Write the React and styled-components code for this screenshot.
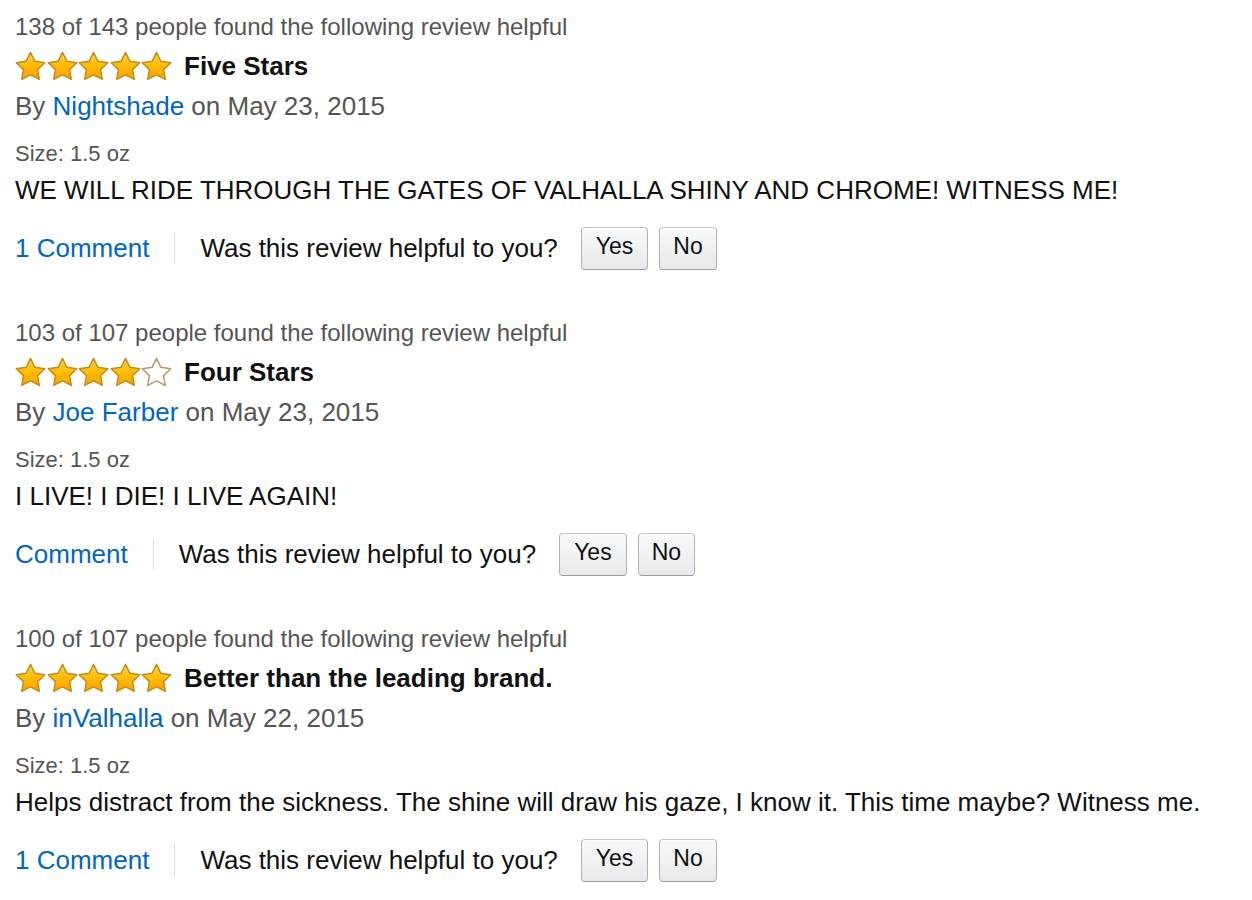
import React from "react";
import styled, { createGlobalStyle } from "styled-components";

const Global = createGlobalStyle`
  html, body { margin: 0; padding: 0; background: #fff; }
  body { font-family: "Liberation Sans", Arial, Helvetica, sans-serif; color: #111; }
`;

const Page = styled.div`
  padding: 8px 0 0 15px;
  display: flex;
  flex-direction: column;
  gap: 44px;
`;

const Review = styled.section`
  display: flex;
  flex-direction: column;
`;

const Helpful = styled.div`
  font-size: 24px;
  line-height: 38px;
  color: #555;
`;

const TitleRow = styled.div`
  display: flex;
  align-items: center;
  height: 40px;
  gap: 12px;
`;

const Stars = styled.div`
  display: flex;
  gap: 0.5px;
`;

const Title = styled.span`
  font-size: 26px;
  font-weight: 700;
  color: #111;
  line-height: 40px;
`;

const Byline = styled.div`
  font-size: 26px;
  line-height: 40px;
  color: #555;
`;

const Link = styled.a`
  color: #0066c0;
  text-decoration: none;
`;

const Size = styled.div`
  margin-top: 10px;
  font-size: 22px;
  line-height: 36px;
  color: #555;
`;

const Body = styled.div`
  font-size: 26px;
  line-height: 36px;
  color: #111;
`;

const Actions = styled.div`
  margin-top: 18px;
  display: flex;
  align-items: center;
  height: 44px;
  font-size: 26px;
`;

const CommentLink = styled(Link)`
  padding-right: 25px;
  border-right: 1px solid #ddd;
  line-height: 30px;
`;

const Question = styled.span`
  padding-left: 25px;
  margin-right: 23px;
  color: #111;
`;

const Buttons = styled.div`
  display: flex;
  gap: 11px;
`;

const Btn = styled.button`
  font-family: inherit;
  font-size: 23px;
  color: #111;
  height: 43px;
  padding: 0 ${(p) => p.$px}px 4px;
  border: 1px solid #adb1b8;
  border-top-color: #c4c6ca;
  border-bottom-color: #9a9ea5;
  border-radius: 4px;
  background: linear-gradient(to bottom, #f8f9fa, #e7e9ec);
  box-shadow: inset 0 1px 0 rgba(255,255,255,0.7);
  cursor: pointer;
`;

const STAR =
  "M15 1.3 L19.23 9.98 L28.79 11.32 L21.85 18.02 L23.52 27.53 L15 23 L6.48 27.53 L8.15 18.02 L1.21 11.32 L10.77 9.98 Z";

function Star({ filled, id }) {
  return (
    <svg width="31" height="30" viewBox="0 0 30 29">
      <defs>
        <linearGradient id={id} x1="0" y1="0" x2="0" y2="1">
          <stop offset="0" stopColor="#ffd64a" />
          <stop offset="0.55" stopColor="#ffb800" />
          <stop offset="1" stopColor="#f2a200" />
        </linearGradient>
      </defs>
      <path
        d={STAR}
        fill={filled ? `url(#${id})` : "#fff"}
        stroke={filled ? "#c58a14" : "#b89a64"}
        strokeWidth="1.4"
        strokeLinejoin="round"
      />
    </svg>
  );
}

function Rating({ value, rid }) {
  return (
    <Stars>
      {[0, 1, 2, 3, 4].map((i) => (
        <Star key={i} filled={i < value} id={`g-${rid}-${i}`} />
      ))}
    </Stars>
  );
}

const reviews = [
  {
    helpful: "138 of 143 people found the following review helpful",
    stars: 5,
    title: "Five Stars",
    author: "Nightshade",
    date: "May 23, 2015",
    body: "WE WILL RIDE THROUGH THE GATES OF VALHALLA SHINY AND CHROME! WITNESS ME!",
    comment: "1 Comment",
  },
  {
    helpful: "103 of 107 people found the following review helpful",
    stars: 4,
    title: "Four Stars",
    author: "Joe Farber",
    date: "May 23, 2015",
    body: "I LIVE! I DIE! I LIVE AGAIN!",
    comment: "Comment",
  },
  {
    helpful: "100 of 107 people found the following review helpful",
    stars: 5,
    title: "Better than the leading brand.",
    author: "inValhalla",
    date: "May 22, 2015",
    body: "Helps distract from the sickness. The shine will draw his gaze, I know it. This time maybe? Witness me.",
    comment: "1 Comment",
  },
];

export default function App() {
  return (
    <>
      <Global />
      <Page>
        {reviews.map((r, idx) => (
          <Review key={idx}>
            <Helpful>{r.helpful}</Helpful>
            <TitleRow>
              <Rating value={r.stars} rid={idx} />
              <Title>{r.title}</Title>
            </TitleRow>
            <Byline>
              By <Link href="#">{r.author}</Link> on {r.date}
            </Byline>
            <Size>Size: 1.5 oz</Size>
            <Body>{r.body}</Body>
            <Actions>
              <CommentLink href="#">{r.comment}</CommentLink>
              <Question>Was this review helpful to you?</Question>
              <Buttons>
                <Btn $px={14}>Yes</Btn>
                <Btn $px={13}>No</Btn>
              </Buttons>
            </Actions>
          </Review>
        ))}
      </Page>
    </>
  );
}
